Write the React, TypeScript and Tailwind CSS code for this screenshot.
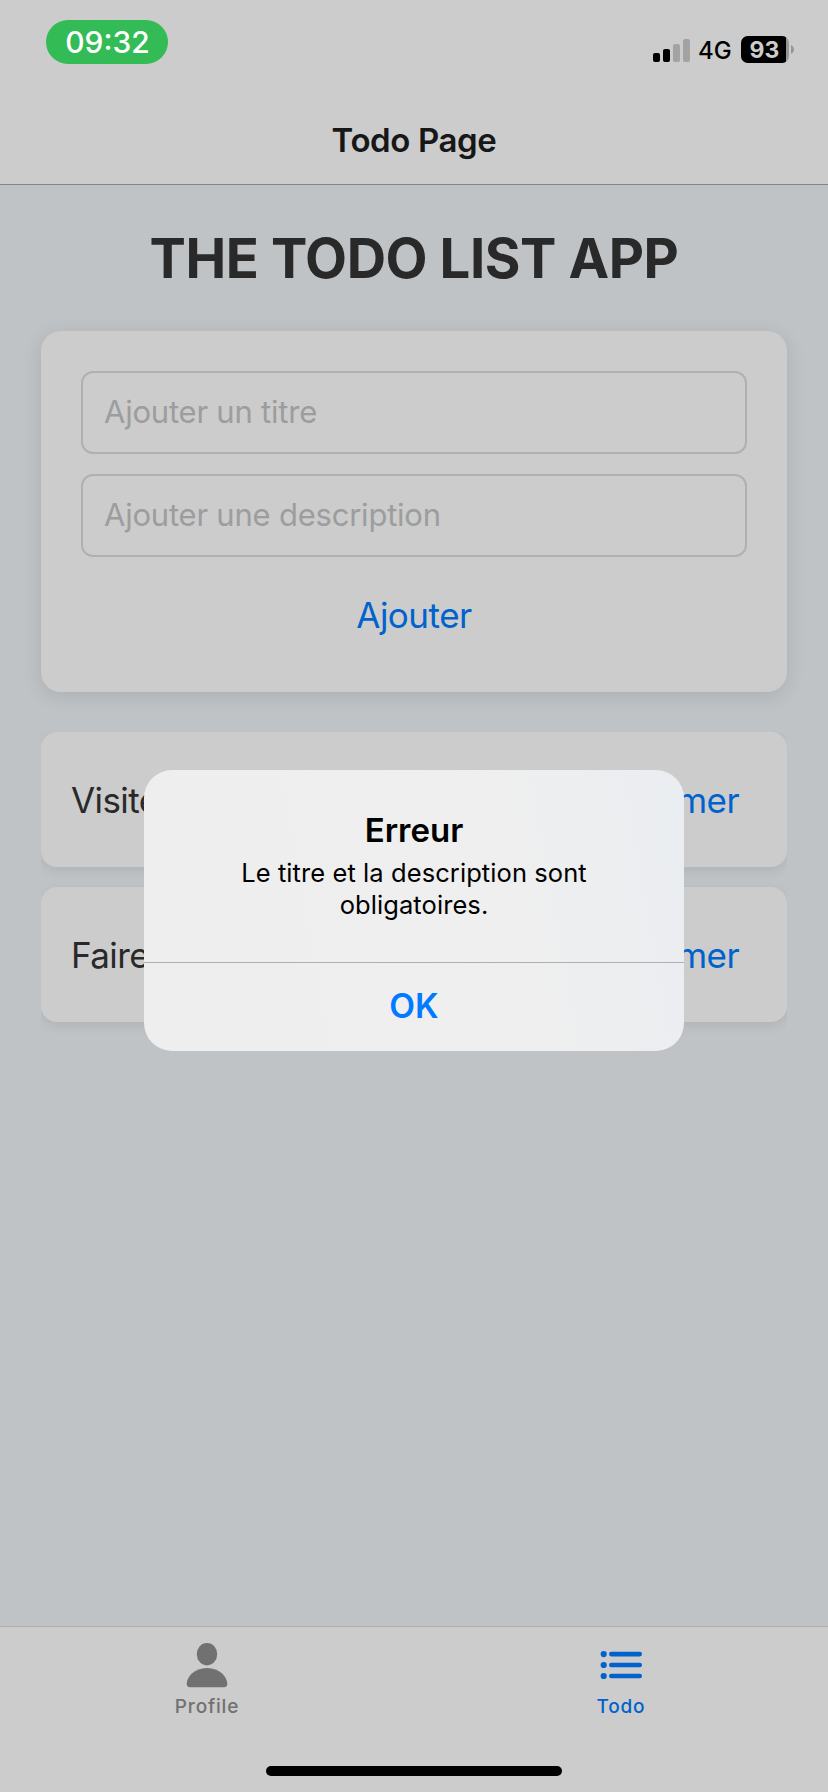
function StatusBar() {
  return (
    <div className="flex h-[96px] items-start justify-between pt-5 pr-[34px] pl-[46px]">
      <div className="flex h-11 w-[122px] items-center justify-center rounded-full bg-[#33bb56] pl-px text-[30px] leading-none font-medium text-white">
        09:32
      </div>
      <div className="mt-4 flex h-[27px] items-center">
        <svg width="38" height="24" viewBox="0 0 38 24" className="mt-0.5">
          <rect x="0" y="14" width="7" height="9" rx="2" fill="#000" />
          <rect x="10" y="10" width="7" height="13" rx="2" fill="#000" />
          <rect x="20" y="5" width="7" height="18" rx="2" fill="#a3a3a3" />
          <rect x="30" y="0" width="7" height="23" rx="2" fill="#a3a3a3" />
        </svg>
        <span className="mt-0.5 ml-[7px] w-[35px] text-[24px] leading-none font-medium text-black">4G</span>
        <div className="ml-2 flex h-[27px] w-12 overflow-hidden rounded-[7px] bg-[#969696]">
          <div className="flex w-[45px] items-center justify-center bg-black pt-px pl-0.5 text-[23px] leading-none font-bold text-[#cccccc]">
            93
          </div>
        </div>
        <svg width="3" height="9" viewBox="0 0 3 9" className="ml-0.5">
          <path d="M0 0C2 1 3 2.8 3 4.5S2 8 0 9Z" fill="#969696" />
        </svg>
      </div>
    </div>
  );
}

function Field({ placeholder }: { placeholder: string }) {
  return (
    <div className="flex h-[83px] items-center rounded-[12px] border-2 border-[#b0b0b0] px-[21px] pb-0.5 text-[31px] leading-none tracking-[-0.22px] text-[#9d9d9d]">
      {placeholder}
    </div>
  );
}

function TodoRow({ title }: { title: string }) {
  return (
    <li className="flex h-[135px] items-center justify-between rounded-[16px] bg-[#cccccc] pt-0.5 pr-[48px] pl-[30px] text-[35px] leading-none tracking-[-0.6px] shadow-[0_4px_12px_rgba(0,0,0,0.08)]">
      <span className="text-[#292929]">{title}</span>
      <span className="text-[#0062cc]">Supprimer</span>
    </li>
  );
}

function TabBar() {
  return (
    <nav className="flex h-[166px] flex-col items-center border-t border-[#adadad] bg-[#cccccc]">
      <div className="grid w-full flex-1 grid-cols-2 text-[19px] leading-none font-medium tracking-[0.8px]">
        <div className="flex flex-col items-center pt-4 text-[#717171]">
          <svg width="42" height="45" viewBox="0 0 42 45" fill="currentColor">
            <ellipse cx="21" cy="11.2" rx="10.2" ry="11.2" />
            <path d="M4 44.2C1.800 44.2 .7 43 .7 40.800C.7 34 8.500 25 21 25S41.300 34 41.300 40.800C41.300 43 40.200 44.200 38 44.200Z" />
          </svg>
          <span className="mt-[9px]">Profile</span>
        </div>
        <div className="flex flex-col items-center pt-4 text-[#0062cc]">
          <svg width="42" height="45" viewBox="0 0 42 45" fill="currentColor">
            <circle cx="3.700" cy="11.100" r="3.100" />
            <circle cx="3.700" cy="22" r="3.100" />
            <circle cx="3.700" cy="33" r="3.100" />
            <rect x="9" y="8.800" width="33" height="4.600" rx="2.300" />
            <rect x="9" y="19.700" width="33" height="4.600" rx="2.300" />
            <rect x="9" y="30.700" width="33" height="4.600" rx="2.300" />
          </svg>
          <span className="mt-[9px]">Todo</span>
        </div>
      </div>
      <div className="mb-4 h-2.5 w-[296px] rounded-full bg-black" />
    </nav>
  );
}

function ErrorAlert() {
  return (
    <div className="absolute top-[770px] left-[144px] flex h-[281px] w-[540px] flex-col items-center overflow-hidden rounded-[28px] bg-[linear-gradient(80deg,#eeeeee_0%,#efefef_65%,#eaedf1_100%)] text-center text-black">
      <div className="flex h-[193px] w-full flex-col items-center border-b border-[#adb0b3] pt-[40px]">
        <h2 className="text-[33px] leading-10 font-semibold">Erreur</h2>
        <p className="mt-[7px] w-[400px] text-[25.5px] leading-8 tracking-[0.08px]">
          Le titre et la description sont obligatoires.
        </p>
      </div>
      <button className="flex w-full flex-1 items-center justify-center text-[33.5px] leading-none font-semibold text-[#007aff]">
        OK
      </button>
    </div>
  );
}

export default function App() {
  return (
    <div className="relative flex h-[1792px] w-[828px] flex-col overflow-hidden bg-[#bfc3c6] font-['Inter',sans-serif]">
      <header className="h-[185px] border-b border-[#80868a] bg-[#cccccc]">
        <StatusBar />
        <h1 className="flex h-[88px] items-center justify-center text-[33px] leading-none font-semibold tracking-[-0.4px] text-[#171717]">
          Todo Page
        </h1>
      </header>
      <main className="flex flex-1 flex-col px-[41px]">
        <h2 className="flex h-[146px] items-center justify-center text-[54.5px] leading-none font-bold tracking-[-0.45px] whitespace-nowrap text-[#292929]">
          THE TODO LIST APP
        </h2>
        <section className="flex h-[361px] flex-col gap-5 rounded-[20px] bg-[#cccccc] px-10 pt-10 shadow-[0_4px_20px_rgba(0,0,0,0.1)]">
          <Field placeholder="Ajouter un titre" />
          <Field placeholder="Ajouter une description" />
          <button className="h-[76px] text-[35px] leading-none tracking-[-0.5px] text-[#0062cc]">Ajouter</button>
        </section>
        <ul className="mt-10 flex flex-1 flex-col gap-5 overflow-hidden">
          <TodoRow title="Visiter" />
          <TodoRow title="Faire" />
        </ul>
      </main>
      <TabBar />
      <ErrorAlert />
    </div>
  );
}
